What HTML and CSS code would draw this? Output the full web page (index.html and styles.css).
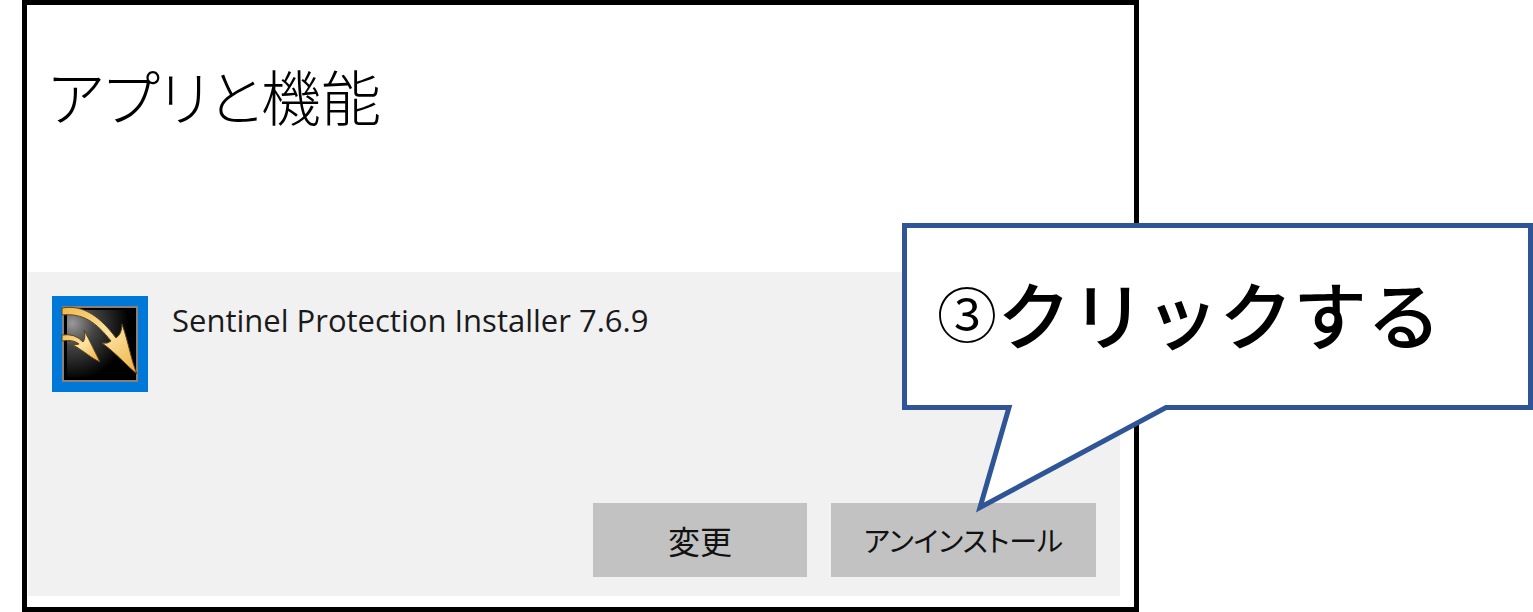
FILE: index.html
```html
<!DOCTYPE html>
<html lang="ja">
<head>
<meta charset="utf-8">
<title>アプリと機能</title>
<link rel="stylesheet" href="styles.css">
</head>
<body>
<div class="stage">
  <main class="window">
    <h1 class="title">アプリと機能</h1>
    <section class="app">
      <div class="app-info">
        <svg class="app-icon" viewBox="0 0 96 96" aria-hidden="true">
          <defs>
            <radialGradient id="plate" cx="0.08" cy="0.2" r="0.85">
              <stop offset="0" stop-color="#999"/>
              <stop offset="0.4" stop-color="#444"/>
              <stop offset="1" stop-color="#000"/>
            </radialGradient>
            <linearGradient id="gold" x1="0" y1="0" x2="1" y2="1">
              <stop offset="0" stop-color="#efb94c"/>
              <stop offset="0.5" stop-color="#fbe3a4"/>
              <stop offset="1" stop-color="#efb040"/>
            </linearGradient>
          </defs>
          <rect width="96" height="96" fill="#0078d7"/>
          <rect x="11" y="11" width="74" height="74" fill="#000" stroke="#8b7f79" stroke-width="2"/>
          <rect x="15" y="14" width="66" height="67" fill="url(#plate)"/>
          <path d="M10 12C32 8 49 22 64 42Q70 38 70 28C77 48 79 64 85 78C74 69 65 58 50 47Q56 48 59 45C44 26 31 17 10 19Z" fill="url(#gold)" stroke="#5d4215" stroke-width="1"/>
          <path d="M10 39Q23 37 31 46Q34 42 32 34C38 45 43 56 48 66C39 62 32 55 21 49L27 48Q21 43 10 45Z" fill="url(#gold)" stroke="#5d4215" stroke-width="1"/>
        </svg>
        <h2 class="app-name">Sentinel Protection Installer 7.6.9</h2>
      </div>
      <div class="actions">
        <button class="button" type="button">変更</button>
        <button class="button button-wide" type="button">アンインストール</button>
      </div>
    </section>
  </main>
  <aside class="callout">
    <p class="callout-text"><span class="step">③</span>クリックする</p>
    <svg class="callout-tail" viewBox="0 0 200 110" aria-hidden="true">
      <path d="M37 3L8 103L194 3V0H37Z" fill="#fff"/>
      <path d="M30 2.500H37L8 102.500L194 2.500H200" fill="none" stroke="#2f5597" stroke-width="5"/>
    </svg>
  </aside>
</div>
</body>
</html>
```
FILE: styles.css
```css
* {
  box-sizing: border-box;
}

body {
  margin: 0;
  background: #fff;
  color: #000;
  font-family: "Noto Sans", "Noto Sans CJK JP", sans-serif;
}

.stage {
  position: relative;
  padding: 0 394px 0 22px;
}

.window {
  border: 5px solid #000;
  padding: 42px 14px 11px 1px;
}

.title {
  margin: 0 0 129px 20px;
  font-family: "Noto Sans CJK JP", sans-serif;
  font-size: 60px;
  font-weight: 300;
  line-height: 96px;
  font-feature-settings: "palt";
}

.app {
  padding: 24px;
  padding-bottom: 19px;
  background: #f1f1f1;
}

.app-info {
  display: flex;
  align-items: flex-start;
  gap: 24px;
}

.app-icon {
  flex: none;
  width: 96px;
  height: 96px;
}

.app-name {
  margin: 0;
  font-family: "Open Sans", sans-serif;
  font-size: 31px;
  font-weight: 400;
  line-height: 48px;
  color: #1a1a1a;
}

.actions {
  display: flex;
  justify-content: flex-end;
  gap: 24px;
  margin-top: 111px;
}

.button {
  width: 214px;
  height: 74px;
  padding: 0;
  border: 0;
  background: #c2c2c2;
  color: #111;
  font-family: "Noto Sans CJK JP", sans-serif;
  font-size: 32px;
  font-feature-settings: "palt";
}

.button-wide {
  width: 265px;
  font-size: 28px;
}

.callout {
  position: absolute;
  top: 223px;
  right: 0;
  width: 631px;
  border: 5px solid #2f5597;
  padding: 32px 30px 41px;
  background: #fff;
}

.callout-text {
  display: flex;
  align-items: center;
  margin: 0;
  font-family: "Noto Sans CJK JP", sans-serif;
  font-size: 74px;
  font-weight: 500;
  line-height: 104px;
}

.step {
  font-size: 60px;
  font-weight: 350;
}

.callout-tail {
  position: absolute;
  top: 100%;
  left: 65px;
  width: 200px;
  height: 110px;
}
```
